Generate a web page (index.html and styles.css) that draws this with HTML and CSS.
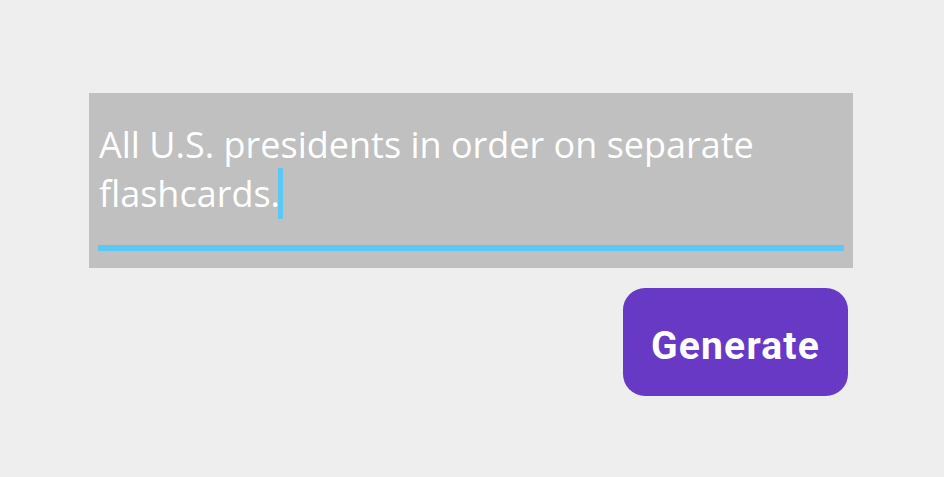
FILE: index.html
```html
<!DOCTYPE html>
<html>
<head>
<meta charset="utf-8">
<link rel="stylesheet" href="styles.css">
</head>
<body>
<main class="page">
  <div class="prompt">
    <div class="prompt-text">All U.S. presidents in order on separate flashcards.<span class="caret"></span></div>
    <div class="underline"></div>
  </div>
  <div class="actions">
    <button class="generate">Generate</button>
  </div>
</main>
</body>
</html>
```

FILE: styles.css
```css
html, body {
  margin: 0;
  padding: 0;
  background: #eeeeee;
}
.page {
  width: 944px;
  height: 477px;
  box-sizing: border-box;
  padding: 93px 0 0 89px;
}
.prompt {
  width: 764px;
  height: 175px;
  box-sizing: border-box;
  background: #c0c0c0;
  padding: 27px 9px 0 9px;
}
.prompt-text {
  font-family: "Open Sans", sans-serif;
  font-size: 36px;
  line-height: 49px;
  color: #ffffff;
  padding-left: 1px;
  height: 98px;
}
.caret {
  display: inline-block;
  width: 5px;
  height: 51px;
  background: #5bc8f5;
  vertical-align: top;
  margin-top: -1px;
  margin-left: -2px;
  border-radius: 1px;
}
.underline {
  margin-top: 27px;
  height: 6px;
  background: #5bc8f5;
}
.actions {
  width: 764px;
  display: flex;
  justify-content: flex-end;
  padding-top: 20px;
}
.generate {
  margin-right: 5px;
  width: 225px;
  height: 108px;
  border: none;
  border-radius: 22px;
  background: #6739c4;
  color: #ffffff;
  font-family: "Roboto", sans-serif;
  font-weight: 700;
  font-size: 39px;
  letter-spacing: 1.2px;
  padding: 8px 0 0 0;
}
```
